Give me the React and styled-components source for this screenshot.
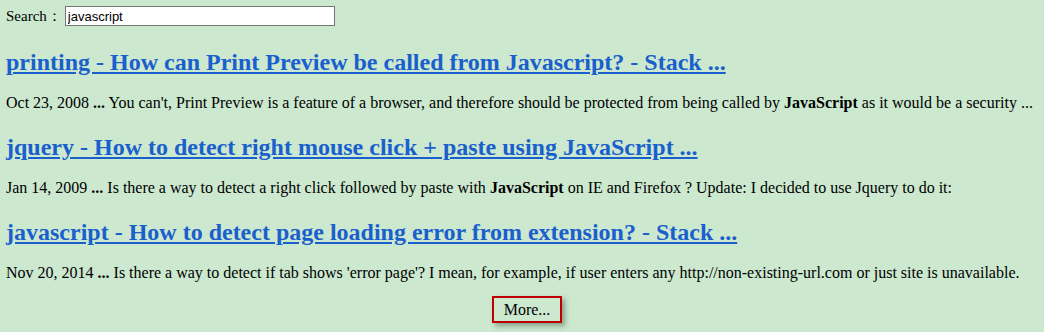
import React from 'react';
import styled, { createGlobalStyle } from 'styled-components';

const GlobalStyle = createGlobalStyle`
  html, body {
    margin: 0;
    padding: 0;
    background: #cce8cf;
  }
  body {
    font-family: "Liberation Serif", "Times New Roman", serif;
    color: #000;
  }
`;

const Page = styled.div`
  padding: 6px 6px 0 6px;
  min-height: 332px;
  box-sizing: border-box;
`;

const SearchRow = styled.div`
  display: flex;
  align-items: center;
  font-size: 15px;
  height: 20px;
`;

const SearchInput = styled.input`
  margin-left: 3px;
  width: 270px;
  height: 20px;
  box-sizing: border-box;
  border: 1px solid #767676;
  padding: 0 2px;
  font-family: Arial, "Liberation Sans", sans-serif;
  font-size: 13px;
  background: #fff;
  outline: none;
`;

const Result = styled.div`
  margin-top: ${(p) => (p.first ? '22px' : '21px')};
`;

const Title = styled.a`
  display: block;
  font-size: 24px;
  font-weight: bold;
  color: #1a60cc;
  text-decoration: underline;
  line-height: 28px;
`;

const Snippet = styled.div`
  margin-top: 18px;
  font-size: 16px;
  line-height: 18px;
  white-space: nowrap;
`;

const Footer = styled.div`
  display: flex;
  justify-content: center;
  margin-top: 14px;
  padding-left: 10px;
`;

const MoreButton = styled.button`
  font-family: "Liberation Serif", "Times New Roman", serif;
  font-size: 16px;
  width: 70px;
  height: 27px;
  background: transparent;
  border: 2px solid #c00000;
  box-shadow: 3px 3px 5px rgba(60, 80, 60, 0.45);
  padding: 0;
  cursor: pointer;
  color: #000;
`;

const results = [
  {
    title: 'printing - How can Print Preview be called from Javascript? - Stack ...',
    date: 'Oct 23, 2008',
    parts: ["You can't, Print Preview is a feature of a browser, and therefore should be protected from being called by ", <b key="b">JavaScript</b>, ' as it would be a security ...'],
  },
  {
    title: 'jquery - How to detect right mouse click + paste using JavaScript ...',
    date: 'Jan 14, 2009',
    parts: ['Is there a way to detect a right click followed by paste with ', <b key="b">JavaScript</b>, ' on IE and Firefox ? Update: I decided to use Jquery to do it:'],
  },
  {
    title: 'javascript - How to detect page loading error from extension? - Stack ...',
    date: 'Nov 20, 2014',
    parts: ["Is there a way to detect if tab shows 'error page'? I mean, for example, if user enters any http://non-existing-url.com or just site is unavailable."],
  },
];

export default function App() {
  return (
    <Page>
      <GlobalStyle />
      <SearchRow>
        Search：<SearchInput defaultValue="javascript" />
      </SearchRow>
      {results.map((r, i) => (
        <Result key={r.title} first={i === 0}>
          <Title href="#">{r.title}</Title>
          <Snippet>
            {r.date} <b>...</b> {r.parts}
          </Snippet>
        </Result>
      ))}
      <Footer>
        <MoreButton>More...</MoreButton>
      </Footer>
    </Page>
  );
}
